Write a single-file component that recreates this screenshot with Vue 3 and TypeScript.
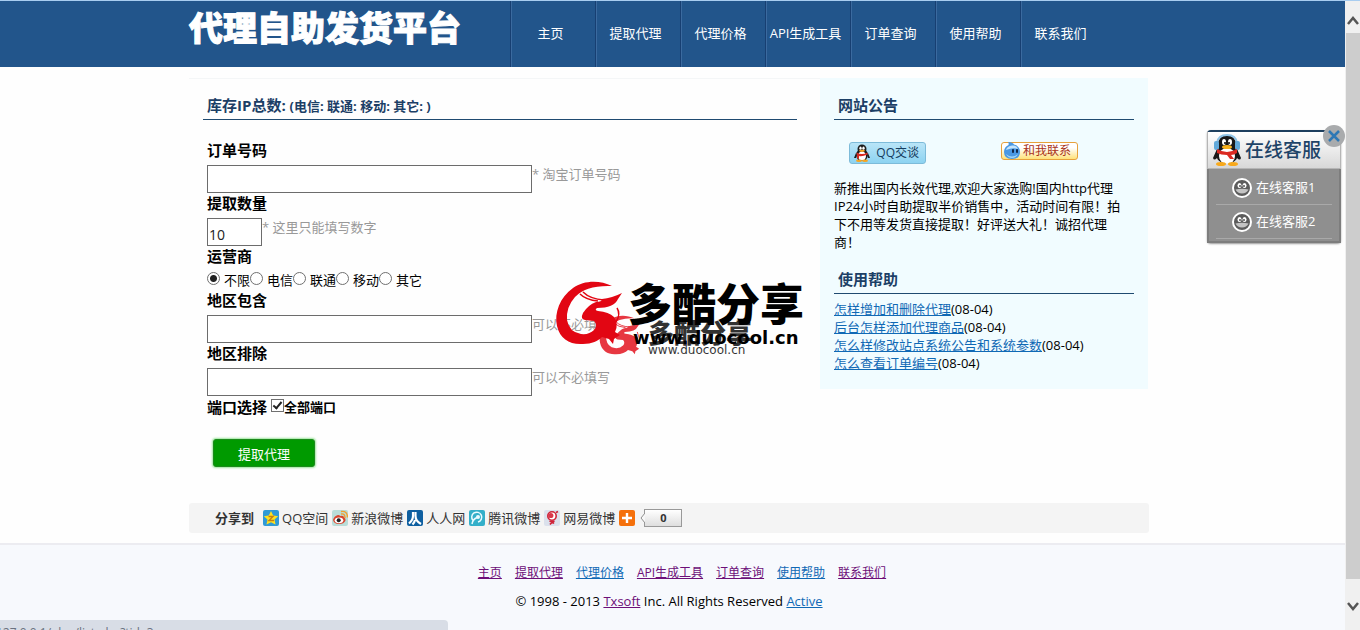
<script setup lang="ts">
import { ref } from 'vue'

interface LinkItem {
  label: string
  visited?: boolean
}

const nav: string[] = ['主页', '提取代理', '代理价格', 'API生成工具', '订单查询', '使用帮助', '联系我们']

const carriers: string[] = ['不限', '电信', '联通', '移动', '其它']

const helpLinks: string[] = [
  '怎样增加和删除代理',
  '后台怎样添加代理商品',
  '怎么样修改站点系统公告和系统参数',
  '怎么查看订单编号',
]

const footerLinks: LinkItem[] = [
  { label: '主页', visited: true },
  { label: '提取代理', visited: true },
  { label: '代理价格' },
  { label: 'API生成工具', visited: true },
  { label: '订单查询', visited: true },
  { label: '使用帮助' },
  { label: '联系我们', visited: true },
]

const orderNo = ref('')
const amount = ref('10')
const carrier = ref('不限')
const include = ref('')
const exclude = ref('')
const allPorts = ref(true)
</script>

<template>
  <div class="window">
    <div class="page">
      <header class="header">
        <div class="container header-row">
          <h1 class="logo">代理自助发货平台</h1>
          <nav class="nav">
            <a v-for="item in nav" :key="item" href="#" class="nav-item">{{ item }}</a>
          </nav>
        </div>
      </header>

      <main class="main">
        <div class="container">
          <div class="columns">
            <section class="content">
              <h2 class="heading">库存IP总数: <small>(电信: 联通: 移动: 其它: )</small></h2>
              <form class="form" @submit.prevent>
                <div class="field">
                  <label class="label" for="order">订单号码</label>
                  <div class="control">
                    <input id="order" v-model="orderNo" class="text" type="text" />
                    <span class="hint">* 淘宝订单号码</span>
                  </div>
                </div>
                <div class="field">
                  <label class="label" for="amount">提取数量</label>
                  <div class="control">
                    <input id="amount" v-model="amount" class="text short" type="text" />
                    <span class="hint">* 这里只能填写数字</span>
                  </div>
                </div>
                <fieldset class="carriers">
                  <legend class="legend">运营商</legend>
                  <div class="radios">
                    <label v-for="c in carriers" :key="c" class="radio">
                      <input v-model="carrier" type="radio" name="carrier" :value="c" />{{ c }}
                    </label>
                  </div>
                </fieldset>
                <div class="field">
                  <label class="label" for="include">地区包含</label>
                  <div class="control">
                    <input id="include" v-model="include" class="text" type="text" />
                    <span class="hint">可以不必填写</span>
                  </div>
                </div>
                <div class="field">
                  <label class="label" for="exclude">地区排除</label>
                  <div class="control">
                    <input id="exclude" v-model="exclude" class="text" type="text" />
                    <span class="hint">可以不必填写</span>
                  </div>
                </div>
                <div class="ports">
                  <span>端口选择</span>
                  <label class="check"><input v-model="allPorts" type="checkbox" />全部端口</label>
                </div>
                <button class="submit" type="submit">提取代理</button>
              </form>
            </section>

            <aside class="aside">
              <h2 class="heading">网站公告</h2>
              <div class="contacts">
                <button class="chat qq" type="button">
                  <svg width="18" height="18" viewBox="0 0 18 18" aria-hidden="true">
                    <ellipse cx="9" cy="11" rx="6" ry="6" fill="#1c1c1c" />
                    <path d="M3 9L1 14l2 0M15 9l2 5-2 0" fill="#1c1c1c" />
                    <ellipse cx="9" cy="5" rx="4.500" ry="4.500" fill="#1c1c1c" />
                    <ellipse cx="9" cy="12" rx="4" ry="4.500" fill="#fff" />
                    <ellipse cx="7.500" cy="4.200" rx="1.200" ry="1.600" fill="#fff" />
                    <ellipse cx="10.500" cy="4.200" rx="1.200" ry="1.600" fill="#fff" />
                    <ellipse cx="9" cy="6.800" rx="3" ry="1.100" fill="#f5a623" />
                    <path d="M3.500 8.500q5.500 3 11 0v2q-5.500 2.500-8.500 1.500v2.500h-2v-3z" fill="#d8281e" />
                    <ellipse cx="6" cy="16.700" rx="3" ry="1.200" fill="#f5a623" />
                    <ellipse cx="12" cy="16.700" rx="3" ry="1.200" fill="#f5a623" />
                  </svg>
                  QQ交谈
                </button>
                <button class="chat wangwang" type="button">
                  <svg width="18" height="18" viewBox="0 0 18 18" aria-hidden="true">
                    <path d="M5 0q5 0 6 2.500Q17 4 17 10q0 7-8 7T1 10q0-5 4.500-7Q6 1 5 0z" fill="#4a98e4" />
                    <path d="M3 8q1-4 6-4.500T15 7q-5-2-12 1z" fill="#c5e4fb" />
                    <path d="M3 12q6 5 12 0-2 4-6 4t-6-4z" fill="#a3d6f8" />
                    <rect x="9" y="7" width="2" height="4" rx="1" fill="#10264a" />
                    <rect x="13" y="7" width="2" height="4" rx="1" fill="#10264a" />
                  </svg>
                  和我联系
                </button>
              </div>
              <p class="notice">
                新推出国内长效代理,欢迎大家选购!国内http代理IP24小时自助提取半价销售中，活动时间有限！拍下不用等发货直接提取！好评送大礼！诚招代理商！
              </p>
              <h2 class="heading">使用帮助</h2>
              <ul class="help">
                <li v-for="item in helpLinks" :key="item"><a href="#">{{ item }}</a>(08-04)</li>
              </ul>
            </aside>
          </div>

          <div class="share">
            <strong class="share-title">分享到</strong>
            <a href="#" class="share-item">
              <svg width="16" height="16" viewBox="0 0 16 16" aria-hidden="true">
                <rect width="16" height="16" rx="2" fill="#2f9ad6" />
                <path d="M8 1l2.200 4.600 5 .6-3.700 3.400 1 5L8 12.200 3.500 14.600l1-5L.8 6.200l5-.6z" fill="#ffe11f" />
                <path d="M5.500 6.500h4.500L6 10.500h5" fill="none" stroke="#c87f10" stroke-width="1.400" />
              </svg>
              QQ空间
            </a>
            <a href="#" class="share-item">
              <svg width="16" height="16" viewBox="0 0 16 16" aria-hidden="true">
                <rect width="16" height="16" rx="2" fill="#b9ddd8" />
                <path d="M9 4q4-1 4 4M9 1.500q6.500-1 6.500 6" fill="none" stroke="#f0a030" stroke-width="1.400" />
                <path d="M1 10q1-4 5-5 2 0 2 1 4-1 4 1.500 2 1 1.500 3Q12 14 7 14t-6-4z" fill="#d9452d" />
                <ellipse cx="7" cy="10.300" rx="4.300" ry="2.900" fill="#fff" />
                <circle cx="6.700" cy="10.300" r="2" fill="#222" />
              </svg>
              新浪微博
            </a>
            <a href="#" class="share-item">
              <svg width="16" height="16" viewBox="0 0 16 16" aria-hidden="true">
                <rect width="16" height="16" rx="2" fill="#0e5fa0" />
                <path d="M6 2v4Q6 10 2 13.500M8.500 2v4q0 5 5.500 8M8 10q-.500 2.500-2.500 4.500" fill="none" stroke="#fff" stroke-width="2.200" />
              </svg>
              人人网
            </a>
            <a href="#" class="share-item">
              <svg width="16" height="16" viewBox="0 0 16 16" aria-hidden="true">
                <rect width="16" height="16" rx="2" fill="#33afc9" />
                <path d="M4 10.500A5 5 0 1 1 9 12M3 14Q4 9 8 7.500" fill="none" stroke="#e9fbff" stroke-width="1.500" />
                <circle cx="9" cy="7" r="2" fill="#e9fbff" />
              </svg>
              腾讯微博
            </a>
            <a href="#" class="share-item">
              <svg width="16" height="16" viewBox="0 0 16 16" aria-hidden="true">
                <rect width="16" height="16" rx="2" fill="#dbe1ec" />
                <circle cx="8" cy="6" r="4.200" fill="#fff" stroke="#cf2338" stroke-width="1.600" />
                <circle cx="6.800" cy="5.500" r="2.600" fill="#d9364a" />
                <path d="M12 2.500l2-1M5.500 11q2.500 1 5 0M8 11v2M6 14.500q2-3 4-1" fill="none" stroke="#cf2338" stroke-width="1.700" />
              </svg>
              网易微博
            </a>
            <a href="#" class="share-item" aria-label="更多">
              <svg width="16" height="16" viewBox="0 0 16 16" aria-hidden="true">
                <rect width="16" height="16" rx="2" fill="#f5700b" />
                <path d="M8 3v10M3 8h10" stroke="#fff" stroke-width="2.400" />
              </svg>
            </a>
            <span class="count">
              <svg width="5" height="10" viewBox="0 0 5 10" aria-hidden="true">
                <path d="M5 0L1 5l4 5" fill="#f7f7f7" stroke="#8f8f8f" />
              </svg>
              0
            </span>
          </div>
        </div>
      </main>

      <footer class="footer">
        <div class="container">
          <nav class="footer-links">
            <a v-for="l in footerLinks" :key="l.label" href="#" :class="{ visited: l.visited }">{{ l.label }}</a>
          </nav>
          <p class="copyright">
            © 1998 - 2013 <a href="#" class="visited">Txsoft</a> Inc. All Rights Reserved <a href="#">Active</a>
          </p>
        </div>
      </footer>
    </div>

    <div class="scrollbar" aria-hidden="true">
      <svg class="arrow" width="14" height="32" viewBox="0 0 14 32">
        <path d="M2 23l5-6 5 6" fill="none" stroke="#555" stroke-width="2.500" />
      </svg>
      <div class="thumb"></div>
      <svg class="arrow" width="14" height="51" viewBox="0 0 14 51">
        <path d="M2 24l5 6 5-6" fill="none" stroke="#555" stroke-width="2.500" />
      </svg>
    </div>

    <svg class="watermark" width="256" height="90" viewBox="0 0 256 90" role="img" aria-label="多酷分享 www.duocool.cn">
      <defs>
        <g id="dragon">
          <path d="M60 15C48 9 32 9 21 17 8 26 2 42 5 55 8 68 18 74 31 73 40 73 46 70 50 66L57 68 61 73 62 68 68 64 63 61Q67 53 62 46 57 41 46 40 42 39 45 37 62 37 66 28L70 22Q60 27 50 28 50 31 44 31 36 34 31 42 28 48 33 49L42 50Q46 54 42 59 37 64 29 63 17 61 15 49 14 36 23 26 34 14 60 15z" />
          <path d="M28 23Q34 29 46 30M31 21Q38 28 52 29M65 37Q69 43 64 51" fill="none" stroke="currentColor" stroke-width="1.500" />
        </g>
      </defs>
      <g class="faint">
        <use href="#dragon" transform="translate(45 38) scale(0.620)" class="red" />
        <text x="96" y="72" class="mark-small">多酷分享</text>
        <text x="96" y="83" class="url-small">www.duocool.cn</text>
      </g>
      <use href="#dragon" class="red" />
      <text x="76" y="50" class="mark">多酷分享</text>
      <text x="81" y="73" class="url">www.duocool.cn</text>
    </svg>

    <aside class="service">
      <div class="service-title">
        <svg width="30" height="32" viewBox="0 0 30 32" aria-hidden="true">
          <path d="M5 15L1 24q1 3 4 0M25 15l4 9q-1 3-4 0" fill="#181818" />
          <ellipse cx="15" cy="20" rx="11" ry="10" fill="#181818" />
          <ellipse cx="15" cy="10" rx="9" ry="9" fill="#181818" />
          <ellipse cx="15" cy="22" rx="8" ry="8" fill="#fff" />
          <path d="M5 9Q6 1 15 1t10 8" fill="none" stroke="#8fc3e6" stroke-width="2" />
          <rect x="2" y="7" width="5" height="9" rx="2" fill="#62a9d9" />
          <rect x="23" y="7" width="5" height="9" rx="2" fill="#62a9d9" />
          <ellipse cx="12" cy="8" rx="2" ry="3" fill="#fff" />
          <ellipse cx="18" cy="8" rx="2" ry="3" fill="#fff" />
          <circle cx="13" cy="9" r="1" />
          <circle cx="17" cy="9" r="1" />
          <ellipse cx="15" cy="13" rx="5" ry="2" fill="#f8b21c" />
          <path d="M5 15q10 6 20 0v4q-3 2-6 2l3 4h-4l-3-4q-6 0-10-2z" fill="#db2a22" />
          <ellipse cx="9" cy="30" rx="5" ry="2" fill="#f8a91c" />
          <ellipse cx="21" cy="30" rx="5" ry="2" fill="#f8a91c" />
        </svg>
        在线客服
      </div>
      <ul class="service-list">
        <li v-for="n in 2" :key="n">
          <a href="#">
            <svg width="20" height="20" viewBox="0 0 20 20" aria-hidden="true">
              <circle cx="10" cy="10" r="9" fill="#5c5c5c" stroke="#fff" stroke-width="2" />
              <ellipse cx="7.500" cy="7.500" rx="2" ry="2.500" fill="#fff" />
              <ellipse cx="12.500" cy="7.500" rx="2" ry="2.500" fill="#fff" />
              <circle cx="8" cy="8" r="1" fill="#555" />
              <circle cx="12" cy="8" r="1" fill="#555" />
              <path d="M3.500 11.500q6.500-1.500 13 0-2 4-6.500 4t-6.500-4z" fill="#c4c4c4" />
            </svg>
            在线客服{{ n }}
          </a>
        </li>
      </ul>
      <button class="close" type="button" aria-label="关闭">
        <svg width="12" height="12" viewBox="0 0 12 12" aria-hidden="true">
          <path d="M1 1l10 10M11 1L1 11" stroke="#2e78b5" stroke-width="2.500" />
        </svg>
      </button>
    </aside>

    <div class="status">127.0.0.1/plus/list.php?tid=3</div>
  </div>
</template>

<style>
body {
  background: #fefefe;
}
</style>

<style scoped>
.window {
  position: relative;
  display: flex;
  height: 100vh;
  overflow: hidden;
  border-top: 1px solid #a9cdf0;
  box-sizing: border-box;
  font-family: 'Open Sans', 'Noto Sans CJK SC', sans-serif;
  font-size: 13px;
  line-height: 18px;
  color: #000;
}

.page {
  flex: 1;
  min-width: 0;
  display: flex;
  flex-direction: column;
}

.container {
  width: 100%;
  max-width: 960px;
  margin: 0 auto;
}

.header {
  background: #22558b;
  padding-right: 7px;
}

.header-row {
  display: flex;
}

.logo {
  flex: 0 0 321px;
  margin: 0;
  padding-top: 7px;
  font-size: 34px;
  line-height: 40px;
  font-weight: 900;
  color: #fff;
  -webkit-text-stroke: 1px #fff;
  white-space: nowrap;
}

.nav {
  display: flex;
}

.nav-item {
  width: 85px;
  box-sizing: border-box;
  padding: 0 5px 2px 0;
  border-left: 1px solid #173f72;
  box-shadow: inset 1px 0 #3b6a9f;
  font-size: 13px;
  line-height: 64px;
  text-align: center;
  color: #fff;
  text-decoration: none;
  white-space: nowrap;
}

.main {
  padding: 11px 7px 0 0;
}

.columns {
  display: flex;
  align-items: flex-start;
}

.content {
  flex: 1;
  padding: 12px 23px 0 14px;
  border-top: 1px solid #f4f6f7;
}

.aside {
  flex: 0 0 300px;
  margin-right: 1px;
  padding: 13px 14px 17px;
  background: #f1fcff;
}

.heading {
  margin: 0;
  padding: 4px;
  border-bottom: 1px solid #1f4a70;
  font-size: 15px;
  line-height: 20px;
  color: #1c3f66;
}

.heading small {
  font-size: 13px;
  line-height: 1;
}

.form {
  padding: 20px 4px 0;
}

.label,
.legend,
.ports {
  display: block;
  padding: 0 0 5px;
  font-size: 15px;
  line-height: 20px;
  font-weight: 700;
}

.legend {
  padding: 0;
}

.control {
  display: flex;
}

.text {
  width: 325px;
  height: 28px;
  box-sizing: border-box;
  padding: 5px 1px 0;
  border: 1px solid #6c6c6c;
  border-radius: 0;
  background: #fff;
  font-family: inherit;
  font-size: 14px;
  color: #222;
}

.text.short {
  width: 55px;
}

.hint {
  color: #999;
}

.carriers {
  margin: 0;
  padding: 0;
  border: 0;
}

.radios {
  display: flex;
  padding-top: 4px;
  line-height: 20px;
}

.radio {
  display: flex;
  gap: 4px;
}

.radio input {
  appearance: none;
  width: 13px;
  height: 13px;
  margin: 2px 0 0;
  border: 1px solid #707070;
  border-radius: 50%;
  background: #fff;
}

.radio input:checked {
  background: radial-gradient(circle, #222 3px, #fff 4px);
}

.ports {
  display: flex;
  gap: 4px;
  padding: 1px 0;
}

.check {
  display: flex;
  font-size: 13px;
}

.check input {
  appearance: none;
  width: 13px;
  height: 13px;
  margin: 2px 0 0;
  border: 1px solid #707070;
  background: #fff;
}

.check input:checked::after {
  content: '';
  display: block;
  width: 3px;
  height: 7px;
  margin: 0 0 0 3px;
  border: solid #222;
  border-width: 0 2px 2px 0;
  transform: rotate(40deg);
}

.submit {
  display: block;
  width: 102px;
  height: 28px;
  margin: 21px 0 0 6px;
  padding: 0;
  border: 1px solid #1c8a1c;
  border-radius: 3px;
  box-shadow: 0 0 2px 1px #9ee59e;
  background: #009a00;
  font-family: inherit;
  font-size: 13px;
  color: #fff;
}

.contacts {
  display: grid;
  grid-template-columns: 77px 77px;
  column-gap: 75px;
  align-items: start;
  padding: 22px 15px 15px;
}

.chat {
  display: flex;
  align-items: center;
  justify-content: space-between;
  width: 77px;
  padding: 0 6px 0 3px;
  border-radius: 3px;
  font-family: inherit;
  font-size: 12px;
  line-height: 20px;
  white-space: nowrap;
}

.qq {
  height: 22px;
  border: 1px solid #7dbbd9;
  background: linear-gradient(#b9e5f8, #8dd3f1);
  color: #153c5e;
}

.wangwang {
  height: 18px;
  padding-left: 1px;
  border: 1px solid #e7a13c;
  background: linear-gradient(#fff 30%, #ffe27a);
  color: #a8321a;
}

.notice {
  margin: 0 0 14px;
  padding-right: 6px;
}

.help {
  list-style: none;
  margin: 0;
  padding: 6px 0 0;
}

.help a,
.footer a {
  color: #1069b5;
}

.footer a.visited {
  color: #6d0f78;
}

.share {
  display: flex;
  align-items: center;
  gap: 4px;
  margin-top: 36px;
  padding: 0 26px;
  border-radius: 3px;
  background: #f4f4f4;
  line-height: 30px;
}

.share-title {
  margin-right: 5px;
  color: #333;
}

.share-item {
  display: flex;
  align-items: center;
  gap: 3px;
  color: #333;
  text-decoration: none;
}

.count {
  position: relative;
  width: 38px;
  box-sizing: border-box;
  margin-left: 5px;
  border: 1px solid #999;
  background: linear-gradient(#fff, #dedede);
  font-size: 11px;
  line-height: 16px;
  font-weight: 700;
  text-align: center;
  color: #333;
}

.count svg {
  position: absolute;
  left: -5px;
  top: 3px;
}

.footer {
  flex: 1;
  margin-top: 10px;
  padding: 18px 7px 0 0;
  border-top: 2px solid #ececf1;
  background: #f7f9fd;
  font-size: 12px;
  line-height: 20px;
}

.footer-links {
  display: flex;
  justify-content: center;
  gap: 13px;
  padding-left: 26px;
}

.copyright {
  margin: 8px 0 0;
  font-size: 13px;
  text-align: center;
}

.copyright a {
  font-size: 13px;
}

.scrollbar {
  flex: 0 0 15px;
  display: flex;
  flex-direction: column;
  align-items: center;
  background: #f0f0f0;
}

.arrow {
  flex: none;
}

.thumb {
  flex: 1;
  align-self: stretch;
  margin-left: 1px;
  background: #cdcdcd;
}

.watermark {
  position: absolute;
  left: 552px;
  top: 270px;
  pointer-events: none;
}

.red {
  fill: #e20613;
  color: #e20613;
}

.faint {
  opacity: 0.8;
}

.mark,
.mark-small {
  font-family: 'Noto Sans CJK SC', sans-serif;
  font-weight: 900;
}

.mark {
  font-size: 44px;
}

.mark-small {
  font-size: 26px;
}

.url,
.url-small {
  font-family: 'DejaVu Sans', sans-serif;
}

.url {
  font-size: 18px;
  font-weight: 700;
}

.url-small {
  font-size: 12px;
}

.service {
  position: absolute;
  top: 129px;
  right: 19px;
  width: 134px;
  box-sizing: border-box;
  border-top: 2px solid #1d3f5e;
  border-radius: 4px;
  box-shadow: 0 1px 2px #999;
  background: #8f8f8f;
}

.service-title {
  display: flex;
  align-items: center;
  gap: 3px;
  height: 37px;
  padding-left: 4px;
  border: 1px solid #b5b5b5;
  border-top: 0;
  box-sizing: border-box;
  background: linear-gradient(#fff, #d8d8d8);
  font-size: 19px;
  font-weight: 500;
  color: #1f4468;
  white-space: nowrap;
}

.service-list {
  list-style: none;
  margin: 0;
  padding: 2px 7px 2px;
  border: 2px solid #7d7d7d;
  border-top: 0;
}

.service-list li {
  border-bottom: 1px solid #a9a9a9;
}

.service-list a {
  display: flex;
  align-items: center;
  gap: 4px;
  padding-left: 16px;
  line-height: 33px;
  color: #fff;
  text-decoration: none;
}

.close {
  position: absolute;
  top: -7px;
  right: -4px;
  display: flex;
  align-items: center;
  justify-content: center;
  width: 22px;
  height: 22px;
  padding: 0;
  border: 0;
  border-radius: 50%;
  background: #a9abad;
}

.status {
  position: absolute;
  left: 0;
  bottom: 0;
  width: 448px;
  height: 10px;
  overflow: hidden;
  border-top-right-radius: 4px;
  background: #d8dde6;
  text-indent: -4px;
  font-size: 12px;
  line-height: 26px;
  color: #6b7280;
}
</style>
